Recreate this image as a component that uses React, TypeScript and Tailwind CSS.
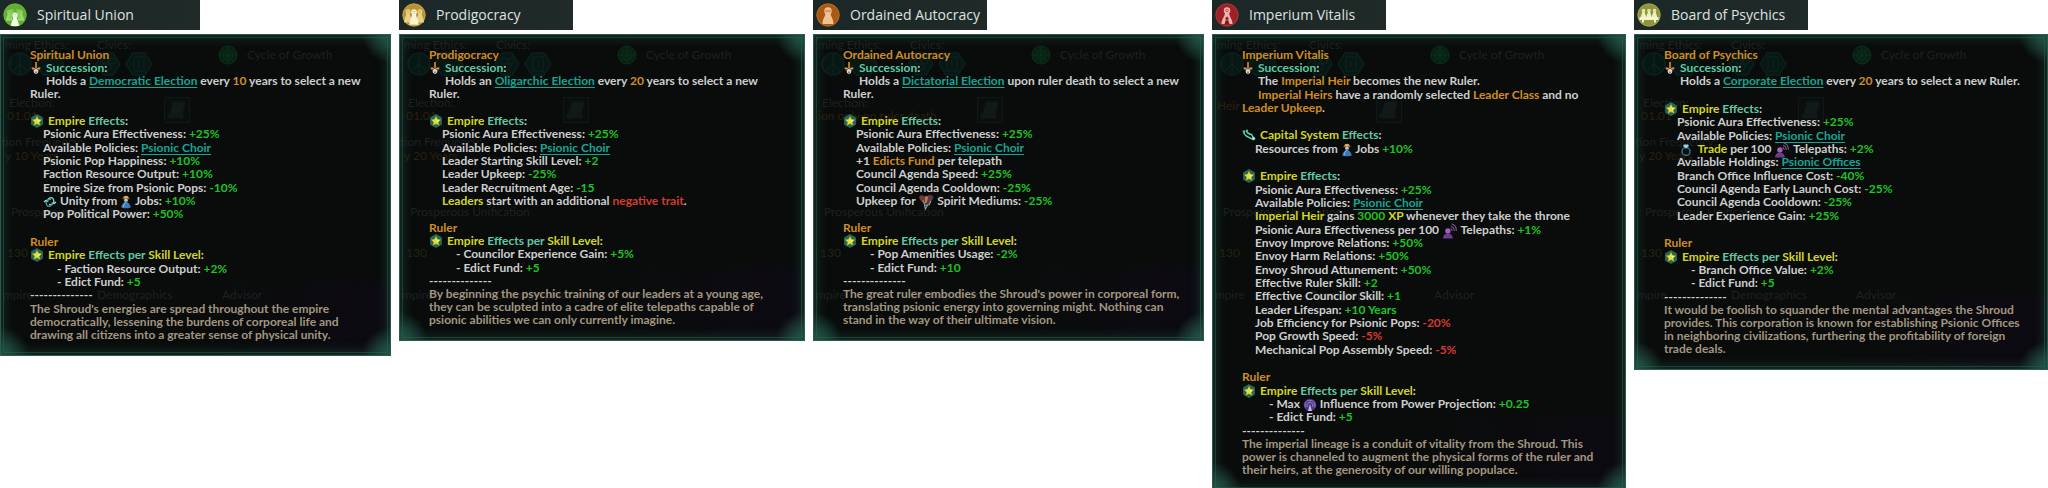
import type { ReactNode } from 'react';

type Kids = { children: ReactNode };

/* ---------- coloured words ---------- */

const Gold = ({ children }: Kids) => <span className="text-[#d08c22]">{children}</span>;
const Yellow = ({ children }: Kids) => <span className="text-[#d3d622]">{children}</span>;
const Teal = ({ children }: Kids) => <span className="text-[#62c9a4]">{children}</span>;
const Good = ({ children }: Kids) => <span className="text-[#1fc324]">{children}</span>;
const Bad = ({ children }: Kids) => <span className="text-[#d63a30]">{children}</span>;
const Term = ({ children }: Kids) => (
  <a href="#" className="text-[#15a594] underline underline-offset-2">{children}</a>
);

/* ---------- inline icons ---------- */

function EmpireIcon() {
  return (
    <svg viewBox="0 0 28 28" className="w-3.5 h-3.5 shrink-0">
      <path d="M14 1 25 7v14l-11 6L3 21V7Z" fill="#1c6b60" stroke="#256f63" strokeWidth="1.5" />
      <path d="m14 3 3.200 7 7.600.9-5.600 5.200 1.500 7.500L14 19.800l-6.700 3.800 1.500-7.500-5.600-5.200 7.600-.9Z" fill="#e2dc3c" stroke="#4a5a1c" strokeWidth="1" />
      <path d="m14 7 2 5 5 .8-4 3.200" fill="#f6f3a0" />
    </svg>
  );
}

function SuccessionIcon() {
  return (
    <svg viewBox="0 0 24 28" className="w-3 h-3.5 shrink-0">
      <path d="M10 2h4v12h-4z" fill="#b9741f" />
      <path d="M3 13h5l4 3 4-3h5l-1 4H4Z" fill="#e29a34" />
      <path d="M12 15l5 4-1 5-4 2-4-2-1-5Z" fill="#d7d7db" />
      <path d="M10 21h4v3h-4z" fill="#7d7f88" />
    </svg>
  );
}

function CapitalIcon() {
  return (
    <svg viewBox="0 0 28 24" className="w-3.5 h-3 shrink-0" fill="none" stroke="#5fd6b6">
      <path d="M3 5c1 8 8 11 17 15M9 3c1 5 4 7 10 8l4 7" strokeWidth="3" />
      <circle cx="4" cy="5" r="2" fill="#4bc9a8" />
      <circle cx="10" cy="3" r="1.500" fill="#4bc9a8" />
      <circle cx="23" cy="19" r="3" fill="#bff5e5" />
    </svg>
  );
}

function UnityIcon() {
  return (
    <svg viewBox="0 0 28 28" className="inline-block align-middle w-3.5 h-3.5 -my-1" fill="none" strokeWidth="2.600">
      <path d="M9 14c0-8 9-12 12-5s-3 11-9 10" stroke="#7fd6d0" />
      <path d="M19 14c0 8-9 12-12 5S10 8 16 9" stroke="#3f9fa0" />
      <path d="M2 14l5-4M26 14l-5 4" stroke="#a6ece4" />
    </svg>
  );
}

function JobIcon() {
  return (
    <svg viewBox="0 0 24 30" className="inline-block align-middle w-3 h-3.5 -my-1">
      <path d="M6 7c0-7 12-7 12 0Z" fill="#eda53a" />
      <path d="M4.500 7h15v2h-15z" fill="#b9741f" />
      <circle cx="12" cy="11" r="4" fill="#a9c6de" />
      <path d="M12 13c5 4 10 8 10 13 0 3-20 3-20 0 0-5 5-9 10-13Z" fill="#3f79b5" />
      <path d="M11 15c-2 4-5 7-5 11" stroke="#8fc0e6" strokeWidth="2" fill="none" />
    </svg>
  );
}

function MediumIcon() {
  return (
    <svg viewBox="0 0 30 30" className="inline-block align-middle w-4 h-4 -my-1">
      <path d="M2 5c4-4 9-3 11 1v13L7 14C5 11 2 9 2 5Z" fill="#7a3a34" />
      <path d="M17 5c4-5 10-3 12 1-2 6-5 9-8 14h-4Z" fill="#5b3a44" />
      <path d="M13 5c3-2 5-1 6 2l-3 11h-3Z" fill="#b27a58" />
      <path d="m9 12 4 9 8-1 3-7M12 21l2 7 4-7" stroke="#8fa3b4" strokeWidth="2" fill="none" />
    </svg>
  );
}

function TelepathIcon() {
  return (
    <svg viewBox="0 0 30 30" className="inline-block align-middle w-4 h-4 -my-1">
      <circle cx="11" cy="15" r="5" fill="#9b62bb" />
      <path d="M2 29c0-7 4-9 9-9s9 2 9 9Z" fill="#6d3d8c" />
      <g fill="none" stroke="#7d5296" strokeWidth="2">
        <path d="M16 10c2 1 3 3 3 5" />
        <path d="M17 6c4 1 6 5 6 9" />
        <path d="M18 2c6 1 9 7 9 13" />
      </g>
    </svg>
  );
}

function TradeIcon() {
  return (
    <svg viewBox="0 0 24 28" className="inline-block align-middle w-3 h-3.5 -my-1">
      <circle cx="12" cy="17" r="8" fill="none" stroke="#2f7290" strokeWidth="3" />
      <path d="M8 3h8l2 3-6 5-6-5Z" fill="#8fd3ea" />
    </svg>
  );
}

function InfluenceIcon() {
  return (
    <svg viewBox="0 0 28 28" className="inline-block align-middle w-3.5 h-3.5 -my-1">
      <circle cx="14" cy="14" r="12.500" fill="#4b3380" />
      <g fill="none" stroke="#9a83cc" strokeWidth="2">
        <path d="M5 19a10 10 0 1 1 18 0" />
        <path d="M9 18a6 6 0 1 1 10 0" />
      </g>
      <path d="M14 12l4 14h-8Z" fill="#c3b2ea" />
    </svg>
  );
}

/* ---------- authority badges ---------- */

function Pawn({ x, y, s = 1, fill }: { x: number; y: number; s?: number; fill: string }) {
  return (
    <g transform={`translate(${x} ${y}) scale(${s})`}>
      <circle cx="0" cy="0" r="5" fill={fill} />
      <path d="M-3 3C-4 10-8 14-8 22H8C8 14 4 10 3 3Z" fill={fill} />
      <path d="M-3-.5q1.500-2 3 0q1.500-2 3 0M0 1v2" stroke="#00000055" strokeWidth="1" fill="none" />
    </g>
  );
}

const badges = {
  democratic: (
    <>
      <circle cx="24" cy="24" r="22.500" fill="#5fae2c" stroke="#79bd46" strokeWidth="1.500" />
      <Pawn x={12} y={18} s={0.8} fill="#9ed672" />
      <Pawn x={36} y={18} s={0.8} fill="#9ed672" />
      <Pawn x={18} y={15} s={0.7} fill="#8ccc5e" />
      <Pawn x={30} y={15} s={0.7} fill="#8ccc5e" />
      <Pawn x={24} y={24} fill="#effbe2" />
    </>
  ),
  oligarchic: (
    <>
      <circle cx="24" cy="24" r="22.500" fill="#b8922a" stroke="#d5b24c" strokeWidth="1.500" />
      <Pawn x={12} y={17} fill="#e8d08a" />
      <Pawn x={36} y={17} fill="#e8d08a" />
      <Pawn x={24} y={18} s={1.15} fill="#fbf4d4" />
    </>
  ),
  dictatorial: (
    <>
      <circle cx="24" cy="24" r="22.500" fill="#a85a14" stroke="#c9792c" strokeWidth="1.500" />
      <circle cx="24" cy="16" r="7.500" fill="#f0c393" />
      <path d="M19 19c0 8-6 12-6 23h22c0-11-6-15-6-23Z" fill="#f0c393" />
      <circle cx="21" cy="16" r="2" fill="none" stroke="#a85a14" />
      <circle cx="27" cy="16" r="2" fill="none" stroke="#a85a14" />
    </>
  ),
  imperial: (
    <>
      <circle cx="24" cy="24" r="22.500" fill="#9c2227" stroke="#bd3f42" strokeWidth="1.500" />
      <circle cx="24" cy="15" r="6.500" fill="#efb4b0" />
      <circle cx="24" cy="15" r="2.500" fill="none" stroke="#9c2227" strokeWidth="1.200" />
      <path d="M20 20c-1 8-7 12-7 22h6l5-16 5 16h6c0-10-6-14-7-22Z" fill="#efb4b0" />
      <circle cx="24" cy="31" r="3.500" fill="#7a1519" stroke="#efb4b0" />
      <path d="M21 42c0-4 1-6 3-7 2 1 3 3 3 7Z" fill="#7a1519" />
    </>
  ),
  corporate: (
    <>
      <circle cx="24" cy="24" r="22.500" fill="#8f953a" stroke="#b1b65c" strokeWidth="1.500" />
      <Pawn x={13} y={15} s={0.7} fill="#eef0c0" />
      <Pawn x={24} y={15} s={0.7} fill="#eef0c0" />
      <Pawn x={35} y={15} s={0.7} fill="#eef0c0" />
      <path d="M5 28h38v6H5zM10 34h4v5h-4zM34 34h4v5h-4z" fill="#f3f4cf" />
    </>
  ),
};

type Authority = keyof typeof badges;

/* ---------- dimmed government screen under the tooltip ---------- */

function Backdrop({ election, frequency }: { election: ReactNode; frequency?: string }) {
  return (
    <div aria-hidden className="absolute inset-0 overflow-hidden text-xs whitespace-nowrap text-[#1d2120] select-none">
      <div className="absolute right-0 bottom-0 w-1/2 h-18 bg-linear-to-r from-transparent to-[#0d0a12]" />
      <span className="absolute left-1 top-0.5">ming Ethics:</span>
      <span className="absolute left-24 top-0.5">Civics:</span>
      <svg viewBox="0 0 150 26" className="absolute left-1 top-4 w-[150px] h-[26px]" fill="#081614" stroke="#0a211d" strokeWidth="1.500">
        <circle cx="15" cy="13" r="11" />
        <path d="M15 2v22M15 13l-7 7M15 13l7 7" />
        <path d="m38 2h14l7 11-7 11H38l-7-11ZM98 2h10l7 11-7 11H98l-7-11ZM128 2h12l7 11-7 11h-12l-7-11Z" />
        <circle cx="100" cy="10" r="3" />
        <circle cx="107" cy="10" r="3" />
        <circle cx="103" cy="16" r="3" />
        <path d="M129 6h10v14h-10zM134 9v8" />
      </svg>
      <svg viewBox="0 0 20 20" className="absolute left-[217px] top-2.5 w-5 h-5" fill="#082012" stroke="#0b2f1b">
        <circle cx="10" cy="10" r="9" />
        <circle cx="10" cy="10" r="5" />
        <path d="M10 1v18M1 10h18M4 4l12 12M16 4 4 16" />
      </svg>
      <span className="absolute left-[246px] top-3">Cycle of Growth</span>
      {election}
      {frequency && (
        <>
          <span className="absolute left-0 top-[99px]">tion Frequency:</span>
          <span className="absolute left-1 top-[113px] text-[#2b200e]">{frequency}</span>
        </>
      )}
      <svg viewBox="0 0 26 26" className="absolute left-[163px] top-[62px] w-[26px] h-[26px]" fill="#0a0f0e" stroke="#111817">
        <path d="M.5.5h25v25H.5z" />
        <path d="M9 5h12l-3 13H6Z M4 17h15v4H4Z" fill="#101a18" />
      </svg>
      <span className="absolute left-2.5 top-[169px]">Prosperous Unification</span>
      <span className="absolute left-1.5 top-[210px] text-[#23240e]">130</span>
      <span className="absolute left-0.5 top-[252px]">mpire</span>
      <span className="absolute left-24 top-[252px]">Demographics</span>
      <span className="absolute left-[221px] top-[252px]">Advisor</span>
    </div>
  );
}

const NextElection = () => (
  <>
    <span className="absolute left-2 top-[60px]">Election:</span>
    <span className="absolute left-1.5 top-[73px] text-[#2b200e]">01.01</span>
  </>
);

/* ---------- tooltip pieces ---------- */

const Blank = () => <div className="h-3.5" />;
const Item = ({ children }: Kids) => <p className="pl-[13px]">{children}</p>;
const SubItem = ({ children }: Kids) => <p className="pl-[27px]">- {children}</p>;

const SuccessionHead = () => (
  <h3 className="flex items-center gap-1 h-[13px]"><SuccessionIcon /><span><Teal>Succession</Teal>:</span></h3>
);

const EmpireHead = () => (
  <h3 className="flex items-center gap-1 h-[13px]"><EmpireIcon /><span><Yellow>Empire</Yellow> <Teal>Effects</Teal>:</span></h3>
);

const RulerHead = () => (
  <>
    <Blank />
    <h3><Gold>Ruler</Gold></h3>
    <h3 className="flex items-center gap-1 h-[13px]">
      <EmpireIcon />
      <span><Yellow>Empire</Yellow> <Teal>Effects per</Teal> <Yellow>Skill Level</Yellow>:</span>
    </h3>
  </>
);

const Flavor = ({ children }: Kids) => (
  <>
    <p>--------------</p>
    <p className="text-[#a29680]">{children}</p>
  </>
);

const AuraAndChoir = () => (
  <>
    <Item>Psionic Aura Effectiveness: <Good>+25%</Good></Item>
    <Item>Available Policies: <Term>Psionic Choir</Term></Item>
  </>
);

interface CardProps {
  name: string;
  authority: Authority;
  wide?: boolean;
  backdrop: ReactNode;
  children: ReactNode;
}

function GovernmentCard({ name, authority, wide, backdrop, children }: CardProps) {
  return (
    <section className="flex flex-col gap-1 min-w-0">
      <header className={`flex items-center gap-2.5 h-[30px] pl-[3px] bg-linear-to-r from-[#1b2827] to-[#202a28] ${wide ? 'w-[200px]' : 'w-[174px]'}`}>
        <svg viewBox="0 0 48 48" className="w-6 h-6 shrink-0">{badges[authority]}</svg>
        <h2 className="font-['Open_Sans'] text-[14px] leading-5 text-[#dfe2e1] whitespace-nowrap">{name}</h2>
      </header>
      <div className="relative border border-[#2c5a4e] bg-[#090c0b]">
        {backdrop}
        <div className="absolute inset-0 shadow-[inset_0_0_14px_0_#1b4439] bg-[radial-gradient(circle_at_100%_0,#2a6a59_0,transparent_28px),radial-gradient(circle_at_0_100%,#2a6a59_0,transparent_28px),radial-gradient(circle_at_100%_100%,#2a6a59_0,transparent_28px)]" />
        <div className="absolute inset-0.5 border border-[#2b6152]/50" />
        <div className="relative grid auto-rows-[minmax(13px,auto)_minmax(13px,auto)_minmax(14px,auto)] px-[29px] pt-[13px] pb-3.5 font-['Lato'] font-bold text-[12px] leading-[13px] text-[#cdcfce] whitespace-nowrap">
          <h3><Gold>{name}</Gold></h3>
          <SuccessionHead />
          {children}
        </div>
      </div>
    </section>
  );
}

export default function App() {
  return (
    <main className="grid grid-cols-[391fr_406fr_391fr_414fr_414fr] items-start gap-2 bg-white font-['Lato'] overflow-hidden">
      <GovernmentCard
        name="Spiritual Union"
        authority="democratic"
        wide
        backdrop={<Backdrop election={<NextElection />} frequency="y 10 Years" />}
      >
        <p><span className="pl-4">Holds a</span> <Term>Democratic Election</Term> every <Gold>10</Gold> years to select a new<br />Ruler.</p>
        <Blank />
        <EmpireHead />
        <AuraAndChoir />
        <Item>Psionic Pop Happiness: <Good>+10%</Good></Item>
        <Item>Faction Resource Output: <Good>+10%</Good></Item>
        <Item>Empire Size from Psionic Pops: <Good>-10%</Good></Item>
        <Item><UnityIcon /> Unity from <JobIcon /> Jobs: <Good>+10%</Good></Item>
        <Item>Pop Political Power: <Good>+50%</Good></Item>
        <RulerHead />
        <SubItem>Faction Resource Output: <Good>+2%</Good></SubItem>
        <SubItem>Edict Fund: <Good>+5</Good></SubItem>
        <Flavor>
          The Shroud's energies are spread throughout the empire<br />
          democratically, lessening the burdens of corporeal life and<br />
          drawing all citizens into a greater sense of physical unity.
        </Flavor>
      </GovernmentCard>

      <GovernmentCard
        name="Prodigocracy"
        authority="oligarchic"
        backdrop={<Backdrop election={<NextElection />} frequency="y 20 Years" />}
      >
        <p><span className="pl-4">Holds an</span> <Term>Oligarchic Election</Term> every <Gold>20</Gold> years to select a new<br />Ruler.</p>
        <Blank />
        <EmpireHead />
        <AuraAndChoir />
        <Item>Leader Starting Skill Level: <Good>+2</Good></Item>
        <Item>Leader Upkeep: <Good>-25%</Good></Item>
        <Item>Leader Recruitment Age: <Good>-15</Good></Item>
        <Item><Yellow>Leaders</Yellow> start with an additional <Bad>negative trait</Bad>.</Item>
        <RulerHead />
        <SubItem>Councilor Experience Gain: <Good>+5%</Good></SubItem>
        <SubItem>Edict Fund: <Good>+5</Good></SubItem>
        <Flavor>
          By beginning the psychic training of our leaders at a young age,<br />
          they can be sculpted into a cadre of elite telepaths capable of<br />
          psionic abilities we can only currently imagine.
        </Flavor>
      </GovernmentCard>

      <GovernmentCard
        name="Ordained Autocracy"
        authority="dictatorial"
        backdrop={
          <Backdrop
            election={
              <>
                <span className="absolute left-2 top-[60px]">Election:</span>
                <span className="absolute left-1 top-[73px] text-[#2b200e]">ion only on ruler death</span>
              </>
            }
          />
        }
      >
        <p><span className="pl-4">Holds a</span> <Term>Dictatorial Election</Term> upon ruler death to select a new<br />Ruler.</p>
        <Blank />
        <EmpireHead />
        <AuraAndChoir />
        <Item>+1 <Gold>Edicts Fund</Gold> per telepath</Item>
        <Item>Council Agenda Speed: <Good>+25%</Good></Item>
        <Item>Council Agenda Cooldown: <Good>-25%</Good></Item>
        <Item>Upkeep for <MediumIcon /> Spirit Mediums: <Good>-25%</Good></Item>
        <RulerHead />
        <SubItem>Pop Amenities Usage: <Good>-2%</Good></SubItem>
        <SubItem>Edict Fund: <Good>+10</Good></SubItem>
        <Flavor>
          The great ruler embodies the Shroud's power in corporeal form,<br />
          translating psionic energy into governing might. Nothing can<br />
          stand in the way of their ultimate vision.
        </Flavor>
      </GovernmentCard>

      <GovernmentCard
        name="Imperium Vitalis"
        authority="imperial"
        backdrop={<Backdrop election={<span className="absolute left-1 top-[63px] text-[#2b200e]">Heir</span>} />}
      >
        <p className="pl-4">The <Gold>Imperial Heir</Gold> becomes the new Ruler.</p>
        <p><span className="pl-4"><Gold>Imperial Heirs</Gold></span> have a randomly selected <Gold>Leader Class</Gold> and no<br /><Gold>Leader Upkeep</Gold>.</p>
        <Blank />
        <h3 className="flex items-center gap-1 h-[13px]"><CapitalIcon /><span><Yellow>Capital System</Yellow> <Teal>Effects</Teal>:</span></h3>
        <Item>Resources from <JobIcon /> Jobs <Good>+10%</Good></Item>
        <Blank />
        <EmpireHead />
        <AuraAndChoir />
        <Item><Yellow>Imperial Heir</Yellow> gains <Good>3000</Good> <Yellow>XP</Yellow> whenever they take the throne</Item>
        <Item>Psionic Aura Effectiveness per 100 <TelepathIcon /> Telepaths: <Good>+1%</Good></Item>
        <Item>Envoy Improve Relations: <Good>+50%</Good></Item>
        <Item>Envoy Harm Relations: <Good>+50%</Good></Item>
        <Item>Envoy Shroud Attunement: <Good>+50%</Good></Item>
        <Item>Effective Ruler Skill: <Good>+2</Good></Item>
        <Item>Effective Councilor Skill: <Good>+1</Good></Item>
        <Item>Leader Lifespan: <Good>+10 Years</Good></Item>
        <Item>Job Efficiency for Psionic Pops: <Bad>-20%</Bad></Item>
        <Item>Pop Growth Speed: <Bad>-5%</Bad></Item>
        <Item>Mechanical Pop Assembly Speed: <Bad>-5%</Bad></Item>
        <RulerHead />
        <SubItem>Max <InfluenceIcon /> Influence from Power Projection: <Good>+0.25</Good></SubItem>
        <SubItem>Edict Fund: <Good>+5</Good></SubItem>
        <Flavor>
          The imperial lineage is a conduit of vitality from the Shroud. This<br />
          power is channeled to augment the physical forms of the ruler and<br />
          their heirs, at the generosity of our willing populace.
        </Flavor>
      </GovernmentCard>

      <GovernmentCard
        name="Board of Psychics"
        authority="corporate"
        backdrop={<Backdrop election={<NextElection />} frequency="y 20 Years" />}
      >
        <p className="pl-4">Holds a <Term>Corporate Election</Term> every <Gold>20</Gold> years to select a new Ruler.</p>
        <Blank />
        <EmpireHead />
        <AuraAndChoir />
        <Item><span className="px-[3px]"><TradeIcon /></span> <Yellow>Trade</Yellow> per 100 <TelepathIcon /> Telepaths: <Good>+2%</Good></Item>
        <Item>Available Holdings: <Term>Psionic Offices</Term></Item>
        <Item>Branch Office Influence Cost: <Good>-40%</Good></Item>
        <Item>Council Agenda Early Launch Cost: <Good>-25%</Good></Item>
        <Item>Council Agenda Cooldown: <Good>-25%</Good></Item>
        <Item>Leader Experience Gain: <Good>+25%</Good></Item>
        <RulerHead />
        <SubItem>Branch Office Value: <Good>+2%</Good></SubItem>
        <SubItem>Edict Fund: <Good>+5</Good></SubItem>
        <Flavor>
          It would be foolish to squander the mental advantages the Shroud<br />
          provides. This corporation is known for establishing Psionic Offices<br />
          in neighboring civilizations, furthering the profitability of foreign<br />
          trade deals.
        </Flavor>
      </GovernmentCard>
    </main>
  );
}
